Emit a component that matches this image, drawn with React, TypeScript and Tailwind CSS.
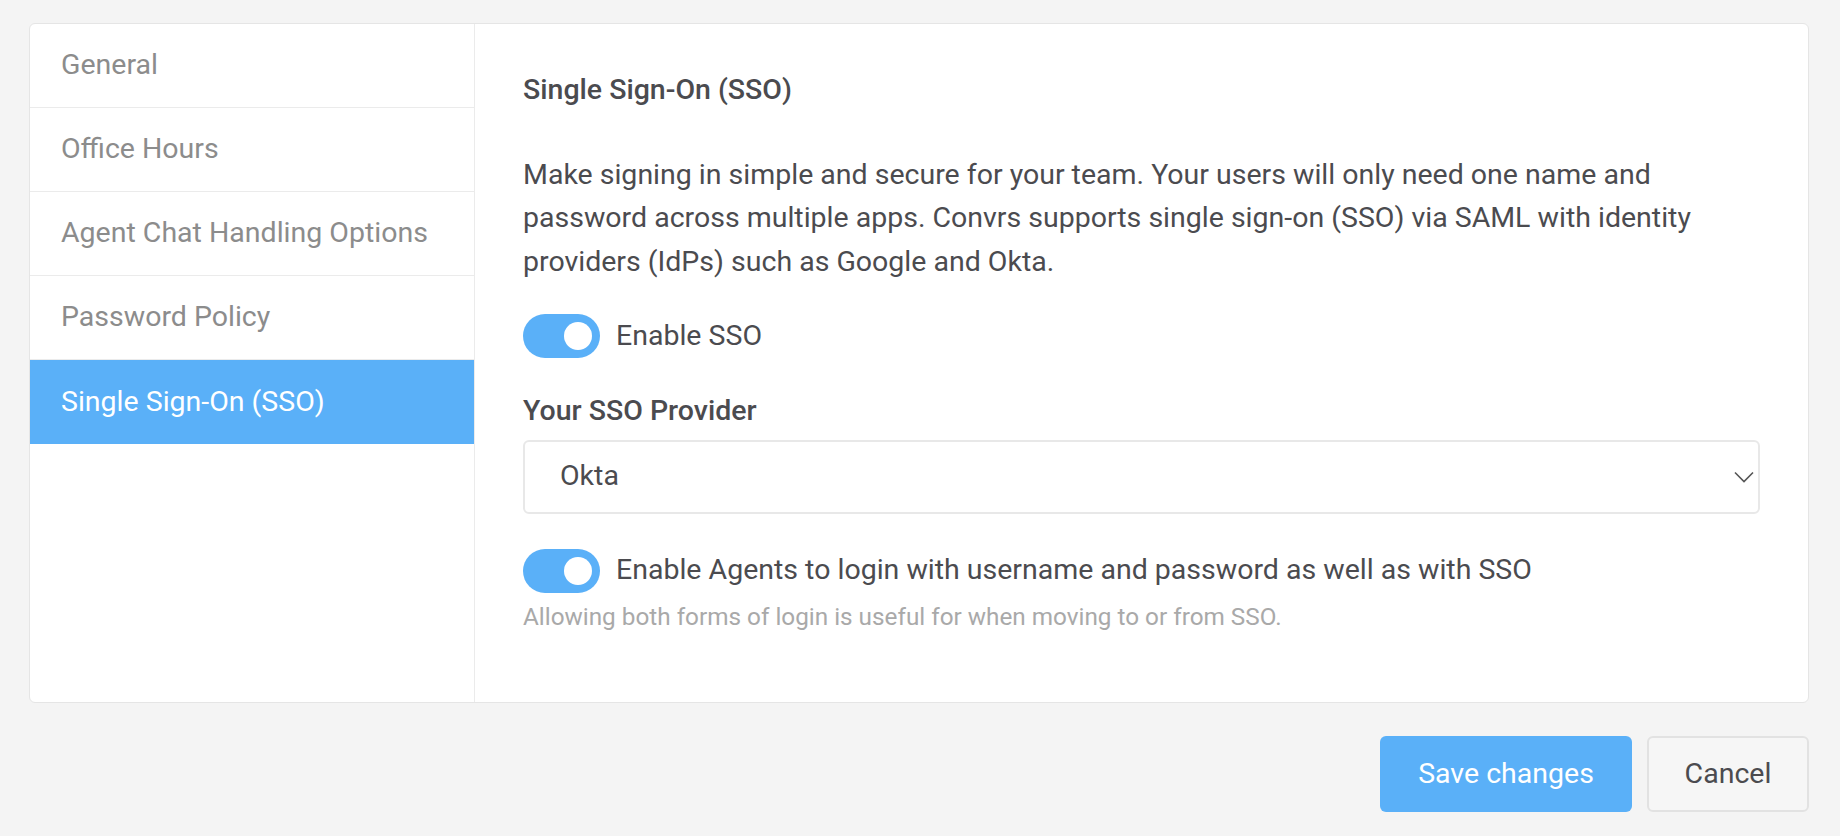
import React, { useState } from 'react';

const navItems = ['General', 'Office Hours', 'Agent Chat Handling Options', 'Password Policy', 'Single Sign-On (SSO)'];

function Toggle({ on, onClick }: { on: boolean; onClick: () => void }) {
  return (
    <button
      type="button"
      onClick={onClick}
      className={`flex h-[44px] w-[77px] shrink-0 items-center rounded-full px-[8px] ${
        on ? 'justify-end bg-[#5ab0f8]' : 'justify-start bg-[#d9d9d9]'
      }`}
    >
      <span className="block h-[28px] w-[28px] rounded-full bg-white" />
    </button>
  );
}

export default function App() {
  const [active, setActive] = useState(4);
  const [sso, setSso] = useState(true);
  const [both, setBoth] = useState(true);

  return (
    <div className="min-h-screen bg-[#f4f4f4] pl-[29px] pr-[31px] pt-[23px] font-['Roboto',sans-serif]">
      <div className="flex h-[680px] rounded-[6px] border border-[#e5e5e5] bg-white">
        <nav className="w-[445px] shrink-0 border-r border-[#ebebeb]">
          {navItems.map((item, i) => (
            <div
              key={item}
              onClick={() => setActive(i)}
              className={`flex h-[84px] cursor-pointer items-center px-[31px] text-[28.5px] ${
                i === active ? 'bg-[#5ab0f8] text-white' : 'border-b border-[#ebebeb] text-[#8c8c8c]'
              }`}
            >
              {item}
            </div>
          ))}
        </nav>

        <main className="flex-1 pl-[48px] pr-[48px] pt-[44px] text-[#4b4b4f]">
          <h2 className="text-[28.5px] font-medium leading-[43.5px]">Single Sign-On (SSO)</h2>

          <p className="mt-[41px] text-[28.5px] leading-[43.5px]">
            Make signing in simple and secure for your team. Your users will only need one name and password across
            multiple apps. Convrs supports single sign-on (SSO) via SAML with identity providers (IdPs) such as Google
            and Okta.
          </p>

          <div className="mt-[31px] flex items-center gap-[16px]">
            <Toggle on={sso} onClick={() => setSso(!sso)} />
            <span className="text-[28.5px]">Enable SSO</span>
          </div>

          <div className="mt-[31px] text-[28.5px] font-medium leading-[43.5px]">Your SSO Provider</div>

          <div className="mt-[7px] flex h-[74px] items-center justify-between rounded-[6px] border-2 border-[#e8e8e8] pl-[35px] pr-[4px]">
            <span className="text-[28.5px]">Okta</span>
            <svg width="20" height="12" viewBox="0 0 20 12" fill="none">
              <polyline points="1,1.5 10,10.5 19,1.5" stroke="#555" strokeWidth="1.6" />
            </svg>
          </div>

          <div className="mt-[35px] flex items-center gap-[16px]">
            <Toggle on={both} onClick={() => setBoth(!both)} />
            <span className="text-[28.5px]">Enable Agents to login with username and password as well as with SSO</span>
          </div>

          <p className="mt-[6px] text-[24.3px] leading-[36px] text-[#a9a9a9]">
            Allowing both forms of login is useful for when moving to or from SSO.
          </p>
        </main>
      </div>

      <div className="mt-[33px] flex justify-end gap-[15px]">
        <button className="h-[76px] w-[252px] rounded-[6px] bg-[#5ab0f8] text-[28.5px] text-white">Save changes</button>
        <button className="h-[76px] w-[162px] rounded-[6px] border-2 border-[#e2e2e2] bg-[#f6f6f6] text-[28.5px] text-[#4b4b4f]">
          Cancel
        </button>
      </div>
    </div>
  );
}
